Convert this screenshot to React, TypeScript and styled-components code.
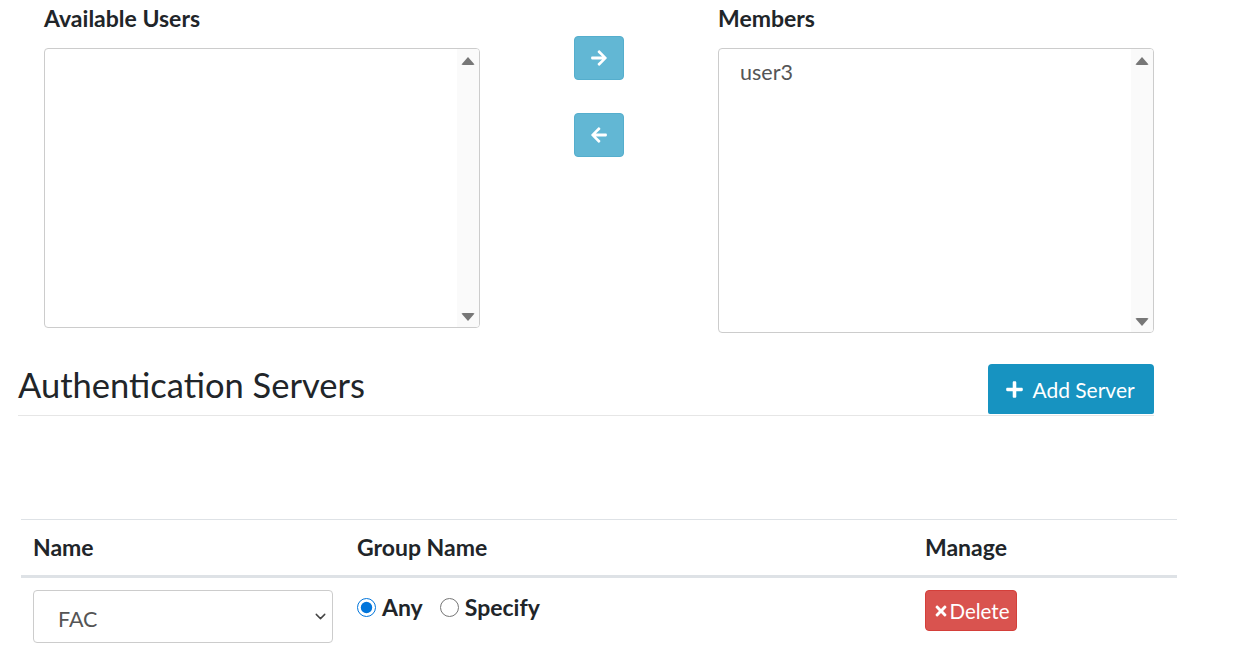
import React, { useState } from "react";
import styled, { createGlobalStyle } from "styled-components";
import { FaArrowRight, FaArrowLeft, FaPlus, FaTimes } from "react-icons/fa";
import { ChevronDown } from "lucide-react";

const GlobalStyle = createGlobalStyle`
  html, body {
    margin: 0;
    padding: 0;
    background: #fff;
    font-family: Lato, "Open Sans", sans-serif;
    color: #212529;
  }
  * { box-sizing: border-box; }
`;

const App = () => {
  const [groupMode, setGroupMode] = useState("any");
  const [available] = useState<string[]>([]);
  const [members] = useState<string[]>(["user3"]);

  return (
    <Page>
      <GlobalStyle />
      <DualList>
        <ListColumn>
          <ListLabel>Available Users</ListLabel>
          <ListBox $height={280}>
            <ListItems>
              {available.map((u) => (
                <ListItem key={u}>{u}</ListItem>
              ))}
            </ListItems>
            <ScrollTrack>
              <ArrowUp />
              <ArrowDown />
            </ScrollTrack>
          </ListBox>
        </ListColumn>

        <MoveButtons>
          <MoveButton>
            <FaArrowRight size={18} />
          </MoveButton>
          <MoveButton>
            <FaArrowLeft size={18} />
          </MoveButton>
        </MoveButtons>

        <ListColumn>
          <ListLabel>Members</ListLabel>
          <ListBox $height={285}>
            <ListItems>
              {members.map((u) => (
                <ListItem key={u}>{u}</ListItem>
              ))}
            </ListItems>
            <ScrollTrack>
              <ArrowUp />
              <ArrowDown />
            </ScrollTrack>
          </ListBox>
        </ListColumn>
      </DualList>

      <SectionHeader>
        <SectionTitle>Authentication Servers</SectionTitle>
        <AddButton>
          <FaPlus size={19} />
          Add Server
        </AddButton>
      </SectionHeader>

      <Table>
        <thead>
          <tr>
            <Th $width={324}>Name</Th>
            <Th $width={568}>Group Name</Th>
            <Th>Manage</Th>
          </tr>
        </thead>
        <tbody>
          <tr>
            <Td>
              <SelectWrap>
                <ServerSelect defaultValue="FAC">
                  <option value="FAC">FAC</option>
                </ServerSelect>
                <SelectChevron>
                  <ChevronDown size={17} strokeWidth={2} />
                </SelectChevron>
              </SelectWrap>
            </Td>
            <Td>
              <RadioGroup>
                <RadioLabel>
                  <Radio
                    type="radio"
                    name="group"
                    checked={groupMode === "any"}
                    onChange={() => setGroupMode("any")}
                  />
                  Any
                </RadioLabel>
                <RadioLabel>
                  <Radio
                    type="radio"
                    name="group"
                    checked={groupMode === "specify"}
                    onChange={() => setGroupMode("specify")}
                  />
                  Specify
                </RadioLabel>
              </RadioGroup>
            </Td>
            <Td>
              <DeleteButton>
                <FaTimes size={16} />
                Delete
              </DeleteButton>
            </Td>
          </tr>
        </tbody>
      </Table>
    </Page>
  );
};

const Page = styled.div`
  width: 1255px;
  min-height: 667px;
`;

const DualList = styled.div`
  display: flex;
  align-items: flex-start;
  padding-left: 44px;
`;

const ListColumn = styled.div`
  width: 436px;
  display: flex;
  flex-direction: column;
`;

const ListLabel = styled.div`
  font-size: 23px;
  font-weight: 700;
  line-height: 36px;
  color: #212529;
  margin-bottom: 12px;
`;

const ListBox = styled.div<{ $height: number }>`
  height: ${(p) => p.$height}px;
  border: 1px solid #ccc;
  border-radius: 4px;
  display: flex;
  overflow: hidden;
`;

const ListItems = styled.div`
  flex: 1;
  padding: 9px 21px;
`;

const ListItem = styled.div`
  font-size: 21.5px;
  line-height: 28px;
  color: #555;
`;

const ScrollTrack = styled.div`
  width: 22px;
  background: #fafafa;
  display: flex;
  flex-direction: column;
  justify-content: space-between;
  align-items: center;
  padding: 8px 0 6px;
`;

const ArrowUp = styled.div`
  width: 0;
  height: 0;
  border-left: 7px solid transparent;
  border-right: 7px solid transparent;
  border-bottom: 8px solid #777;
  border-radius: 2px;
`;

const ArrowDown = styled.div`
  width: 0;
  height: 0;
  border-left: 7px solid transparent;
  border-right: 7px solid transparent;
  border-top: 8px solid #777;
  border-radius: 2px;
`;

const MoveButtons = styled.div`
  width: 238px;
  display: flex;
  flex-direction: column;
  align-items: center;
  gap: 33px;
  padding-top: 36px;
`;

const MoveButton = styled.button`
  width: 50px;
  height: 44px;
  border: 1px solid #55aecd;
  border-radius: 4px;
  background: #62b7d4;
  color: #fff;
  display: flex;
  align-items: center;
  justify-content: center;
  padding: 0;
  cursor: pointer;
`;

const SectionHeader = styled.div`
  margin: 31px 101px 0 18px;
  display: flex;
  align-items: flex-end;
  justify-content: space-between;
  border-bottom: 1px solid #e6e6e6;
`;

const SectionTitle = styled.h2`
  margin: 0;
  font-size: 34.5px;
  font-weight: 400;
  line-height: 42px;
  color: #212529;
  padding-bottom: 9px;
`;

const AddButton = styled.button`
  width: 166px;
  height: 50px;
  margin-bottom: 1px;
  border: none;
  border-radius: 4px 4px 2px 2px;
  background: #1793c1;
  color: #fff;
  font-family: Lato, sans-serif;
  font-size: 21px;
  display: flex;
  align-items: center;
  justify-content: center;
  gap: 8px;
  padding: 0 2px 0 0;
  cursor: pointer;
`;

const Table = styled.table`
  margin: 103px 0 0 21px;
  width: 1156px;
  border-collapse: collapse;
  border-top: 1px solid #dee2e6;
`;

const Th = styled.th<{ $width?: number }>`
  width: ${(p) => (p.$width ? `${p.$width}px` : "auto")};
  text-align: left;
  font-size: 23px;
  font-weight: 700;
  color: #212529;
  height: 57px;
  padding: 0 12px 1px 12px;
  border-bottom: 3px solid #dee2e6;
  vertical-align: middle;
`;

const Td = styled.td`
  padding: 12px 12px;
  vertical-align: top;
`;

const SelectWrap = styled.div`
  position: relative;
  width: 300px;
`;

const ServerSelect = styled.select`
  appearance: none;
  width: 300px;
  height: 53px;
  border: 1px solid #ccc;
  border-radius: 4px;
  background: #fff;
  padding: 4px 24px 0;
  font-family: Lato, sans-serif;
  font-size: 21.5px;
  color: #555;
`;

const SelectChevron = styled.span`
  position: absolute;
  right: 4px;
  top: 18px;
  color: #444;
  pointer-events: none;
  display: flex;
`;

const RadioGroup = styled.div`
  display: flex;
  align-items: center;
  gap: 17px;
  margin-top: 3px;
`;

const RadioLabel = styled.label`
  display: flex;
  align-items: center;
  gap: 6px;
  font-size: 23px;
  font-weight: 700;
  color: #212529;
  line-height: 28px;
  cursor: pointer;
`;

const Radio = styled.input`
  width: 19px;
  height: 19px;
  margin: 0;
  accent-color: #0075db;
`;

const DeleteButton = styled.button`
  height: 41px;
  width: 92px;
  border: 1px solid #d43f3a;
  border-radius: 4px;
  background: #d9534f;
  color: #fff;
  font-family: Lato, sans-serif;
  font-size: 20.5px;
  display: flex;
  align-items: center;
  justify-content: center;
  gap: 1px;
  padding: 0;
  cursor: pointer;
`;

export default App;
